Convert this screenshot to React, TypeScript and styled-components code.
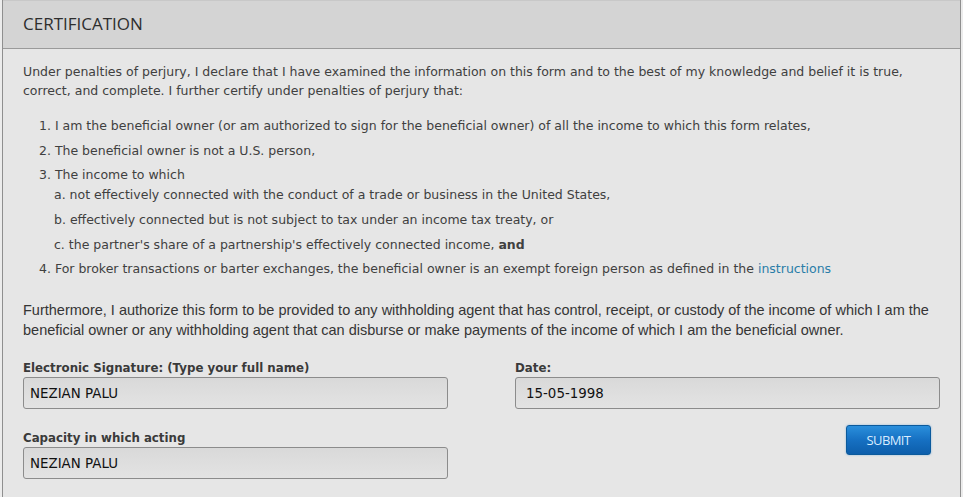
import React from 'react';
import styled, { createGlobalStyle } from 'styled-components';

const GlobalStyle = createGlobalStyle`
  html, body {
    margin: 0;
    padding: 0;
    background: #ececec;
  }
  body {
    font-family: "DejaVu Sans", Verdana, sans-serif;
  }
`;

const Panel = styled.section`
  margin-left: 2px;
  width: 959px;
  height: 497px;
  border-left: 1px solid #8f8f8f;
  border-right: 1px solid #8f8f8f;
  background: #e6e6e6;
  box-sizing: border-box;
  overflow: hidden;
`;

const Header = styled.header`
  height: 49px;
  background: #d4d4d4;
  border-top: 1px solid #c8c8c8;
  border-bottom: 1px solid #9a9a9a;
  box-sizing: border-box;
  display: flex;
  align-items: center;
  padding-left: 20px;
`;

const Title = styled.h2`
  margin: 0 0 2px;
  font-family: "Open Sans", "Noto Sans", sans-serif;
  font-weight: 400;
  font-size: 17px;
  color: #2e2e2e;
`;

const Body = styled.div`
  padding: 13px 20px 0 20px;
  color: #404040;
`;

const Intro = styled.p`
  margin: 0;
  font-size: 12.5px;
  line-height: 19px;
`;

const List = styled.ol`
  list-style: none;
  margin: 18px 0 0;
  padding: 0 0 0 16px;
  font-size: 12.5px;
`;

const Item = styled.li`
  line-height: 15px;
  margin-bottom: 9.7px;
  white-space: nowrap;
`;

const SubList = styled.ol`
  list-style: none;
  margin: 5px 0 0;
  padding: 0 0 0 15px;
`;

const SubItem = styled.li`
  line-height: 15px;
  margin-bottom: 9.7px;
  &:last-child {
    margin-bottom: 0;
  }
`;

const Link = styled.a`
  color: #2a7da8;
  text-decoration: none;
`;

const Further = styled.p`
  margin: 25px 0 0;
  font-family: "Liberation Sans", Arial, sans-serif;
  font-size: 14.5px;
  line-height: 19.5px;
  color: #353535;
`;

const FormGrid = styled.div`
  display: grid;
  grid-template-columns: 425px 425px;
  justify-content: space-between;
  margin-top: 21px;
`;

const Column = styled.div`
  display: flex;
  flex-direction: column;
`;

const Label = styled.label`
  font-size: 11.8px;
  font-weight: 700;
  color: #3a3a3a;
  line-height: 14px;
  margin-bottom: 2px;
`;

const Field = styled.div<{ $inset?: number }>`
  height: 32px;
  box-sizing: border-box;
  border: 1px solid #8c8c8c;
  border-radius: 3px;
  background: linear-gradient(180deg, #d9d9d9 0%, #e3e3e3 100%);
  display: flex;
  align-items: center;
  padding-left: ${p => p.$inset ?? 6}px;
  font-size: 13.4px;
  color: #111;
  margin-bottom: 22px;
`;

const ButtonRow = styled.div`
  display: flex;
  justify-content: flex-end;
  padding-right: 9px;
  margin-top: -6px;
`;

const SubmitButton = styled.button`
  width: 85px;
  height: 30px;
  border: 1px solid #0b5a9c;
  border-radius: 3px;
  background: linear-gradient(180deg, #2a8fdc 0%, #1670c2 50%, #0d5eab 100%);
  box-shadow: 0 0 2px rgba(60, 140, 210, 0.6);
  color: #d9ecff;
  font-family: "Open Sans", "Noto Sans", sans-serif;
  font-size: 13px;
  letter-spacing: -0.6px;
  cursor: pointer;
`;

export default function App() {
  return (
    <>
      <GlobalStyle />
      <Panel>
        <Header>
          <Title>CERTIFICATION</Title>
        </Header>
        <Body>
          <Intro>
            Under penalties of perjury, I declare that I have examined the information on this form and to the best of my
            knowledge and belief it is true,
            <br />
            correct, and complete. I further certify under penalties of perjury that:
          </Intro>
          <List>
            <Item>1. I am the beneficial owner (or am authorized to sign for the beneficial owner) of all the income to which this form relates,</Item>
            <Item>2. The beneficial owner is not a U.S. person,</Item>
            <Item>
              3. The income to which
              <SubList>
                <SubItem>a. not effectively connected with the conduct of a trade or business in the United States,</SubItem>
                <SubItem>b. effectively connected but is not subject to tax under an income tax treaty, or</SubItem>
                <SubItem>c. the partner's share of a partnership's effectively connected income, <b>and</b></SubItem>
              </SubList>
            </Item>
            <Item>
              4. For broker transactions or barter exchanges, the beneficial owner is an exempt foreign person as defined in the{' '}
              <Link href="#">instructions</Link>
            </Item>
          </List>
          <Further>
            Furthermore, I authorize this form to be provided to any withholding agent that has control, receipt, or custody of the income of which I am the
            beneficial owner or any withholding agent that can disburse or make payments of the income of which I am the beneficial owner.
          </Further>
          <FormGrid>
            <Column>
              <Label>Electronic Signature: (Type your full name)</Label>
              <Field>NEZIAN PALU</Field>
              <Label>Capacity in which acting</Label>
              <Field>NEZIAN PALU</Field>
            </Column>
            <Column>
              <Label>Date:</Label>
              <Field $inset={10}>15-05-1998</Field>
              <ButtonRow>
                <SubmitButton>SUBMIT</SubmitButton>
              </ButtonRow>
            </Column>
          </FormGrid>
        </Body>
      </Panel>
    </>
  );
}
